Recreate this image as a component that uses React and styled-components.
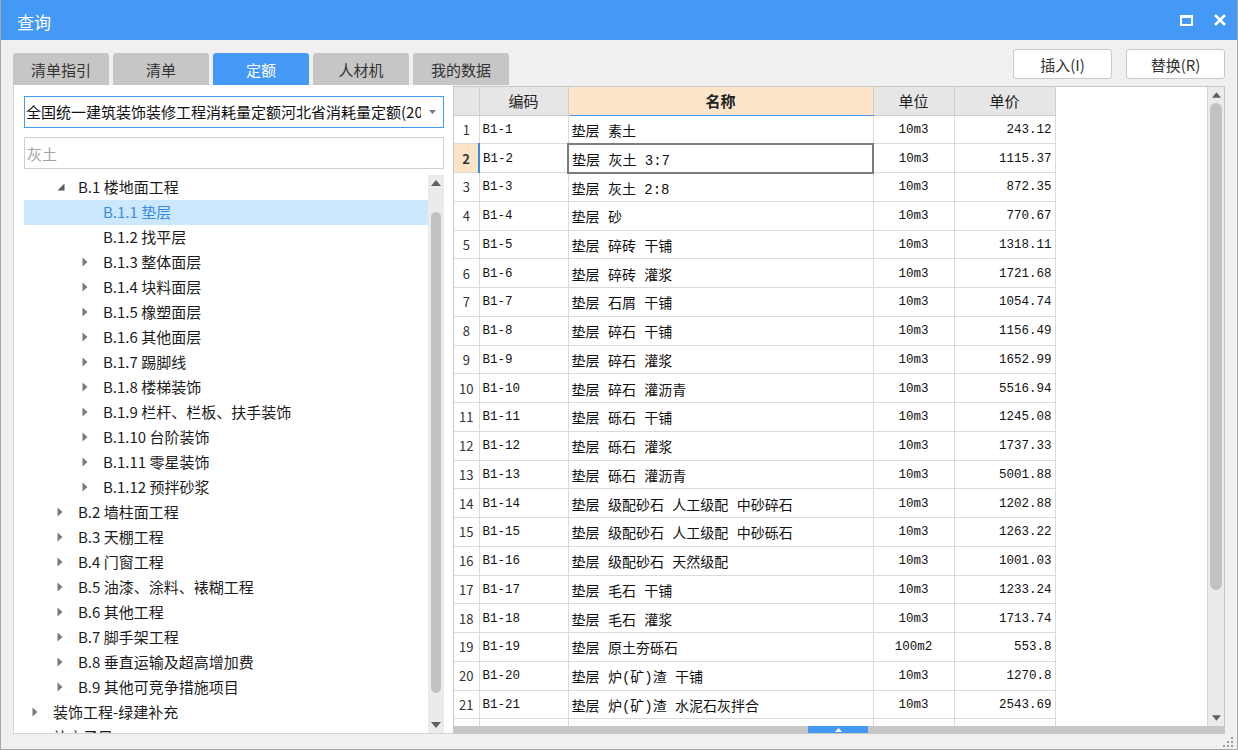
import React from 'react';
import styled, { createGlobalStyle } from 'styled-components';

const GlobalStyle = createGlobalStyle`
  html, body { margin: 0; padding: 0; background: #fff; }
  body { font-family: "Noto Sans CJK SC", "Noto Sans", sans-serif; color: #222; }
  * { box-sizing: border-box; }
`;

const BLUE = '#4499f7';

const Window = styled.div`
  width: 1238px;
  height: 750px;
  display: flex;
  flex-direction: column;
  background: #f0f0f0;
  border: 1px solid #a8a8a8;
  border-top: none;
  overflow: hidden;
`;

const TitleBar = styled.div`
  height: 40px;
  flex: none;
  background: ${BLUE};
  color: #fff;
  display: flex;
  align-items: center;
  padding: 3px 11px 0 16px;
  font-size: 17px;
`;

const Title = styled.div`
  flex: 1;
  line-height: 20px;
`;

const TitleIcons = styled.div`
  display: flex;
  align-items: center;
  gap: 21px;
  margin-top: -3px;
`;

const TopRow = styled.div`
  height: 45px;
  flex: none;
  display: flex;
  justify-content: space-between;
  padding: 0 12px;
`;

const Tabs = styled.div`
  display: flex;
  gap: 4px;
  align-self: flex-end;
`;

const Tab = styled.div`
  width: 96px;
  height: 32px;
  border-radius: 3px 3px 0 0;
  background: ${p => (p.$active ? BLUE : '#c6c6c6')};
  color: ${p => (p.$active ? '#fff' : '#333')};
  font-size: 15px;
  display: flex;
  align-items: center;
  justify-content: center;
`;

const Buttons = styled.div`
  display: flex;
  gap: 14px;
  margin-top: 9px;
`;

const Button = styled.button`
  width: 99px;
  height: 30px;
  background: #fff;
  border: 1px solid #c8c8c8;
  border-radius: 3px;
  font-family: inherit;
  font-size: 15px;
  color: #333;
  padding: 0;
`;

const Main = styled.div`
  height: 649px;
  flex: none;
  display: flex;
  padding: 0 12px;
`;

const LeftPanel = styled.div`
  width: 440px;
  flex: none;
  background: #fff;
  border-left: 1px solid #d4d4d4;
  border-bottom: 1px solid #d4d4d4;
  padding: 11px 9px 0 10px;
  display: flex;
  flex-direction: column;
`;

const Select = styled.div`
  height: 32px;
  flex: none;
  border: 1px solid ${BLUE};
  display: flex;
  align-items: center;
  padding-left: 1px;
  font-size: 15px;
  color: #111;
`;

const SelectText = styled.div`
  flex: 1;
  white-space: nowrap;
  overflow: hidden;
  line-height: 30px;
`;

const SelectArrow = styled.div`
  width: 22px;
  flex: none;
  display: flex;
  justify-content: center;
`;

const Search = styled.div`
  height: 32px;
  flex: none;
  margin-top: 9px;
  border: 1px solid #cfcfcf;
  display: flex;
  align-items: center;
  padding-left: 2px;
  font-size: 15px;
  color: #a3a3a3;
`;

const TreeBox = styled.div`
  flex: 1;
  margin-top: 6px;
  display: flex;
  min-height: 0;
`;

const TreeList = styled.div`
  flex: 1;
  overflow: hidden;
`;

const TreeRow = styled.div`
  height: 25px;
  display: flex;
  align-items: center;
  padding-left: ${p => 8 + p.$level * 25}px;
  padding-bottom: 2px;
  background: ${p => (p.$selected ? '#cce8ff' : 'transparent')};
  color: ${p => (p.$selected ? '#3a8ae4' : '#1c1c1c')};
  font-size: 15px;
  white-space: nowrap;
`;

const Toggle = styled.div`
  width: 21px;
  flex: none;
  display: flex;
  align-items: center;
  padding-top: 1px;
`;

const VScroll = styled.div`
  width: ${p => p.$w}px;
  flex: none;
  background: #ebebeb;
  border-left: ${p => (p.$edge ? '1px solid #d8d8d8' : 'none')};
  display: flex;
  flex-direction: column;
  align-items: center;
`;

const ScrollBtn = styled.div`
  height: 16px;
  flex: none;
  display: flex;
  align-items: center;
  justify-content: center;
  align-self: stretch;
`;

const ThumbArea = styled.div`
  flex: 1;
  align-self: stretch;
  display: flex;
  justify-content: center;
`;

const Thumb = styled.div`
  width: ${p => p.$w}px;
  height: ${p => p.$h}px;
  margin-top: ${p => p.$top}px;
  border-radius: ${p => p.$w / 2}px;
  background: #c2c2c2;
`;

const RightPanel = styled.div`
  flex: 1;
  margin-top: 1px;
  height: 648px;
  border: 1px solid #c8c8c8;
  display: flex;
  flex-direction: column;
  background: #fff;
`;

const GridArea = styled.div`
  flex: 1;
  display: flex;
  min-height: 0;
`;

const GridView = styled.div`
  flex: 1;
  overflow: hidden;
  background: #fff;
`;

const Table = styled.table`
  border-collapse: collapse;
  table-layout: fixed;
  width: 601px;
`;

const HeadCell = styled.th`
  height: 28px;
  padding: 0;
  font-weight: ${p => (p.$accent ? 700 : 400)};
  font-size: 15px;
  color: #222;
  background: ${p => (p.$accent ? '#fde5c9' : '#e6e6e6')};
  border: 1px solid #cdcdcd;
  border-top: none;
  border-bottom: ${p => (p.$accent ? `1px solid ${BLUE}` : '1px solid #cdcdcd')};
  &:first-child { border-left: none; }
`;

const Row = styled.tr`
  height: 28.75px;
`;

const Cell = styled.td`
  padding: 1px 3px 0;
  border: 1px solid #dadada;
  white-space: nowrap;
  overflow: hidden;
  text-align: ${p => p.$align || 'left'};
  font-family: ${p => (p.$cjk ? '"Liberation Mono", "Noto Sans CJK SC", monospace' : '"Liberation Mono", monospace')};
  font-size: ${p => (p.$cjk ? 14 : 12.5)}px;
  color: #111;
  &:first-child { border-left: none; }
`;

const NumCell = styled.td`
  padding: 0;
  border: 1px solid #dadada;
  border-left: none;
  border-right: ${p => (p.$current ? `2px solid #3a8ae4` : '1px solid #dadada')};
  background: ${p => (p.$current ? '#fde4c6' : '#fff')};
  font-weight: ${p => (p.$current ? 700 : 400)};
  text-align: center;
  font-size: 13px;
  color: #333;
`;

const FocusCell = styled(Cell)`
  border: 2px solid #7c7c7c;
`;

const HScroll = styled.div`
  height: 7px;
  flex: none;
  background: #c6c6c6;
  display: flex;
`;

const HHandle = styled.div`
  width: 60px;
  margin-left: ${p => p.$offset}px;
  background: ${BLUE};
  display: flex;
  justify-content: center;
  align-items: center;
`;

const BottomBar = styled.div`
  flex: 1;
  display: flex;
  justify-content: flex-end;
  align-items: flex-end;
  padding: 0 4px 2px 0;
`;

const Collapsed = () => (
  <svg width="6" height="10" viewBox="0 0 6 10"><path d="M0.5 0.5 L5.5 5 L0.5 9.5 Z" fill="#7a7a7a" /></svg>
);

const Expanded = () => (
  <svg width="8" height="8" viewBox="0 0 8 8"><path d="M7.5 0.5 L7.5 7.5 L0.5 7.5 Z" fill="#5a5a5a" /></svg>
);

const Up = ({ w = 10 }) => (
  <svg width={w} height="6" viewBox="0 0 10 6"><path d="M0 6 L5 0 L10 6 Z" fill="#606060" /></svg>
);

const Down = ({ w = 10 }) => (
  <svg width={w} height="6" viewBox="0 0 10 6"><path d="M0 0 L10 0 L5 6 Z" fill="#606060" /></svg>
);

const tree = [
  { l: 1, t: 'B.1 楼地面工程', s: 'open' },
  { l: 2, t: 'B.1.1 垫层', s: 'leaf', sel: true },
  { l: 2, t: 'B.1.2 找平层', s: 'leaf' },
  { l: 2, t: 'B.1.3 整体面层' },
  { l: 2, t: 'B.1.4 块料面层' },
  { l: 2, t: 'B.1.5 橡塑面层' },
  { l: 2, t: 'B.1.6 其他面层' },
  { l: 2, t: 'B.1.7 踢脚线' },
  { l: 2, t: 'B.1.8 楼梯装饰' },
  { l: 2, t: 'B.1.9 栏杆、栏板、扶手装饰' },
  { l: 2, t: 'B.1.10 台阶装饰' },
  { l: 2, t: 'B.1.11 零星装饰' },
  { l: 2, t: 'B.1.12 预拌砂浆' },
  { l: 1, t: 'B.2 墙柱面工程' },
  { l: 1, t: 'B.3 天棚工程' },
  { l: 1, t: 'B.4 门窗工程' },
  { l: 1, t: 'B.5 油漆、涂料、裱糊工程' },
  { l: 1, t: 'B.6 其他工程' },
  { l: 1, t: 'B.7 脚手架工程' },
  { l: 1, t: 'B.8 垂直运输及超高增加费' },
  { l: 1, t: 'B.9 其他可竞争措施项目' },
  { l: 0, t: '装饰工程-绿建补充' },
  { l: 0, t: '补充子目', s: 'leaf' },
];

const rows = [
  ['B1-1', '垫层 素土', '10m3', '243.12'],
  ['B1-2', '垫层 灰土 3:7', '10m3', '1115.37'],
  ['B1-3', '垫层 灰土 2:8', '10m3', '872.35'],
  ['B1-4', '垫层 砂', '10m3', '770.67'],
  ['B1-5', '垫层 碎砖 干铺', '10m3', '1318.11'],
  ['B1-6', '垫层 碎砖 灌浆', '10m3', '1721.68'],
  ['B1-7', '垫层 石屑 干铺', '10m3', '1054.74'],
  ['B1-8', '垫层 碎石 干铺', '10m3', '1156.49'],
  ['B1-9', '垫层 碎石 灌浆', '10m3', '1652.99'],
  ['B1-10', '垫层 碎石 灌沥青', '10m3', '5516.94'],
  ['B1-11', '垫层 砾石 干铺', '10m3', '1245.08'],
  ['B1-12', '垫层 砾石 灌浆', '10m3', '1737.33'],
  ['B1-13', '垫层 砾石 灌沥青', '10m3', '5001.88'],
  ['B1-14', '垫层 级配砂石 人工级配 中砂碎石', '10m3', '1202.88'],
  ['B1-15', '垫层 级配砂石 人工级配 中砂砾石', '10m3', '1263.22'],
  ['B1-16', '垫层 级配砂石 天然级配', '10m3', '1001.03'],
  ['B1-17', '垫层 毛石 干铺', '10m3', '1233.24'],
  ['B1-18', '垫层 毛石 灌浆', '10m3', '1713.74'],
  ['B1-19', '垫层 原土夯砾石', '100m2', '553.8'],
  ['B1-20', '垫层 炉(矿)渣 干铺', '10m3', '1270.8'],
  ['B1-21', '垫层 炉(矿)渣 水泥石灰拌合', '10m3', '2543.69'],
  ['B1-22', '垫层 炉(矿)渣 水泥拌合', '10m3', '2012.44'],
];

const tabs = ['清单指引', '清单', '定额', '人材机', '我的数据'];

export default function App() {
  return (
    <>
      <GlobalStyle />
      <Window>
        <TitleBar>
          <Title>查询</Title>
          <TitleIcons>
            <svg width="13" height="11" viewBox="0 0 13 11">
              <rect x="1" y="1.5" width="11" height="8.5" fill="none" stroke="#fff" strokeWidth="2" />
              <rect x="0" y="0" width="13" height="3" fill="#fff" />
            </svg>
            <svg width="12" height="12" viewBox="0 0 12 12">
              <path d="M1 1 L11 11 M11 1 L1 11" stroke="#fff" strokeWidth="2.6" />
            </svg>
          </TitleIcons>
        </TitleBar>

        <TopRow>
          <Tabs>
            {tabs.map(t => (
              <Tab key={t} $active={t === '定额'}>{t}</Tab>
            ))}
          </Tabs>
          <Buttons>
            <Button>插入(I)</Button>
            <Button>替换(R)</Button>
          </Buttons>
        </TopRow>

        <Main>
          <LeftPanel>
            <Select>
              <SelectText>全国统一建筑装饰装修工程消耗量定额河北省消耗量定额(2012)</SelectText>
              <SelectArrow>
                <svg width="7" height="4" viewBox="0 0 7 4"><path d="M0 0 L7 0 L3.5 4 Z" fill="#777" /></svg>
              </SelectArrow>
            </Select>
            <Search>灰土</Search>
            <TreeBox>
              <TreeList>
                {tree.map(n => (
                  <TreeRow key={n.t} $level={n.l} $selected={n.sel}>
                    <Toggle>
                      {n.s === 'open' ? <Expanded /> : n.s === 'leaf' ? null : <Collapsed />}
                    </Toggle>
                    {n.t}
                  </TreeRow>
                ))}
              </TreeList>
              <VScroll $w={16}>
                <ScrollBtn><Up /></ScrollBtn>
                <ThumbArea><Thumb $w={10} $h={481} $top={21} /></ThumbArea>
                <ScrollBtn><Down /></ScrollBtn>
              </VScroll>
            </TreeBox>
          </LeftPanel>

          <RightPanel>
            <GridArea>
              <GridView>
                <Table>
                  <colgroup>
                    <col style={{ width: 25 }} />
                    <col style={{ width: 89 }} />
                    <col style={{ width: 305 }} />
                    <col style={{ width: 81 }} />
                    <col style={{ width: 101 }} />
                  </colgroup>
                  <thead>
                    <tr>
                      <HeadCell />
                      <HeadCell>编码</HeadCell>
                      <HeadCell $accent>名称</HeadCell>
                      <HeadCell>单位</HeadCell>
                      <HeadCell>单价</HeadCell>
                    </tr>
                  </thead>
                  <tbody>
                    {rows.map((r, i) => {
                      const current = i === 1;
                      const NameCell = current ? FocusCell : Cell;
                      return (
                        <Row key={r[0]}>
                          <NumCell $current={current}>{i + 1}</NumCell>
                          <Cell>{r[0]}</Cell>
                          <NameCell $cjk>{r[1]}</NameCell>
                          <Cell $align="center">{r[2]}</Cell>
                          <Cell $align="right">{r[3]}</Cell>
                        </Row>
                      );
                    })}
                  </tbody>
                </Table>
              </GridView>
              <VScroll $w={17} $edge>
                <ScrollBtn><Up w={9} /></ScrollBtn>
                <ThumbArea><Thumb $w={12} $h={487} $top={0} /></ThumbArea>
                <ScrollBtn><Down w={9} /></ScrollBtn>
              </VScroll>
            </GridArea>
            <HScroll>
              <HHandle $offset={354}>
                <svg width="7" height="4" viewBox="0 0 7 4"><path d="M0 4 L3.5 0 L7 4 Z" fill="#fff" /></svg>
              </HHandle>
            </HScroll>
          </RightPanel>
        </Main>

        <BottomBar>
          <svg width="10" height="10" viewBox="0 0 10 10" fill="#9a9a9a">
            <rect x="8" y="0" width="2" height="2" />
            <rect x="4" y="4" width="2" height="2" />
            <rect x="8" y="4" width="2" height="2" />
            <rect x="0" y="8" width="2" height="2" />
            <rect x="4" y="8" width="2" height="2" />
            <rect x="8" y="8" width="2" height="2" />
          </svg>
        </BottomBar>
      </Window>
    </>
  );
}
